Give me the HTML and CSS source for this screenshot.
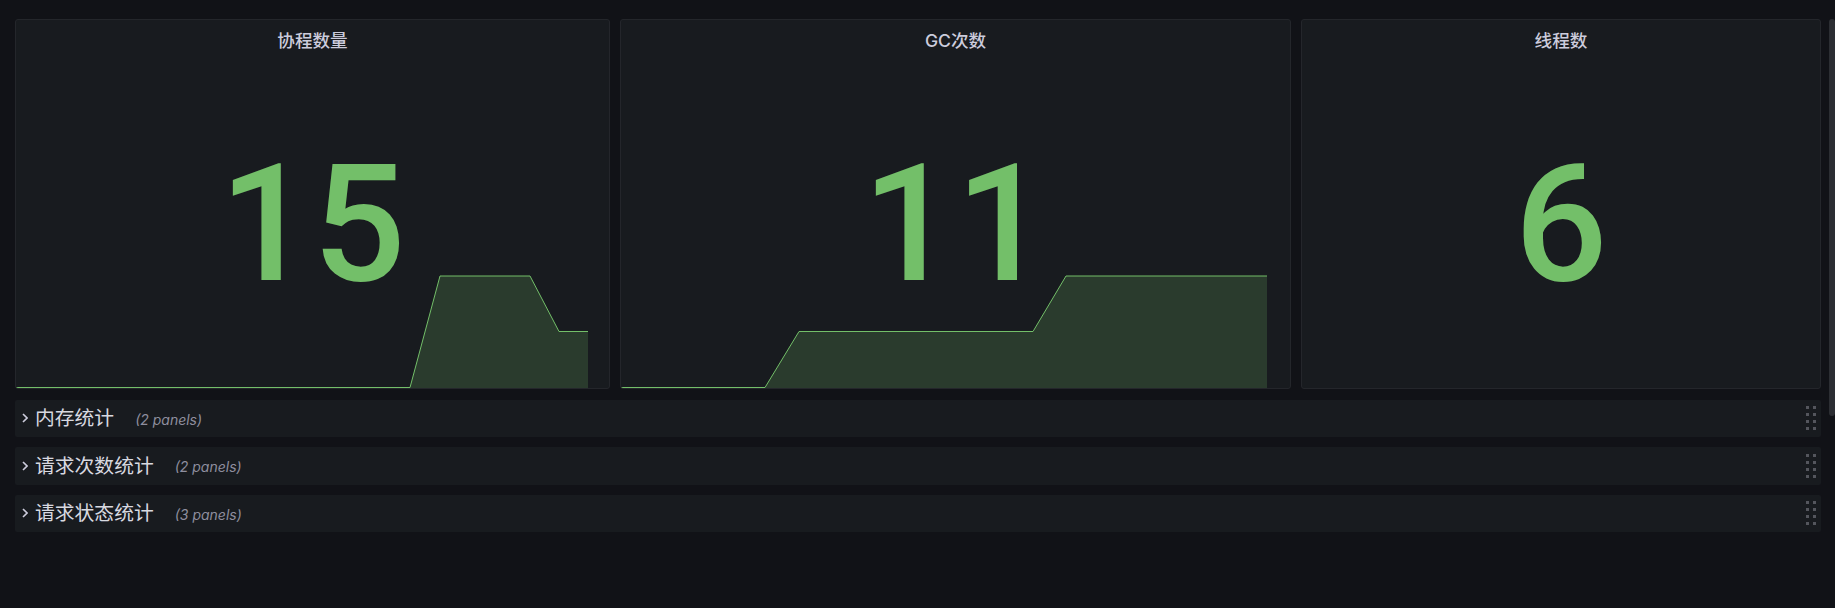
FILE: index.html
```html
<!DOCTYPE html>
<html lang="zh-CN">
<head>
<meta charset="utf-8">
<title>Dashboard</title>
<link rel="stylesheet" href="styles.css">
</head>
<body>
<div class="dashboard">
  <div class="panels">
    <section class="panel">
      <header class="panel-title">协程数量</header>
      <div class="panel-body"><span class="big-value">15</span></div>
      <svg class="spark" width="580" height="113" viewBox="0 0 580 113">
        <polygon class="spark-fill" points="0,112.5 394,112.5 424,1 514,1 543,56.5 572,56.5 572,113 0,113"/>
        <polyline class="spark-line" points="0,112.5 394,112.5 424,1 514,1 543,56.5 572,56.5"/>
      </svg>
    </section>
    <section class="panel">
      <header class="panel-title">GC次数</header>
      <div class="panel-body"><span class="big-value">11</span></div>
      <svg class="spark" width="650" height="113" viewBox="0 0 650 113">
        <polygon class="spark-fill" points="0,112.5 144,112.5 178,56.5 412,56.5 445,1 646,1 646,113 0,113"/>
        <polyline class="spark-line" points="0,112.5 144,112.5 178,56.5 412,56.5 445,1 646,1"/>
      </svg>
    </section>
    <section class="panel">
      <header class="panel-title">线程数</header>
      <div class="panel-body"><span class="big-value">6</span></div>
    </section>
  </div>

  <div class="rows">
    <div class="row">
      <svg class="chevron" width="6" height="10" viewBox="0 0 6 10"><polyline points="1,1 5,5 1,9"/></svg>
      <span class="row-title">内存统计</span>
      <span class="row-count">(2 panels)</span>
      <span class="drag"><i></i><i></i><i></i><i></i><i></i><i></i><i></i><i></i></span>
    </div>
    <div class="row">
      <svg class="chevron" width="6" height="10" viewBox="0 0 6 10"><polyline points="1,1 5,5 1,9"/></svg>
      <span class="row-title">请求次数统计</span>
      <span class="row-count">(2 panels)</span>
      <span class="drag"><i></i><i></i><i></i><i></i><i></i><i></i><i></i><i></i></span>
    </div>
    <div class="row">
      <svg class="chevron" width="6" height="10" viewBox="0 0 6 10"><polyline points="1,1 5,5 1,9"/></svg>
      <span class="row-title">请求状态统计</span>
      <span class="row-count">(3 panels)</span>
      <span class="drag"><i></i><i></i><i></i><i></i><i></i><i></i><i></i><i></i></span>
    </div>
  </div>
</div>
<div class="scrollbar"></div>
</body>
</html>
```

FILE: styles.css
```css
html, body {
  margin: 0;
  padding: 0;
  height: 100%;
}
body {
  background: #111217;
  color: #ccccdc;
  font-family: Inter, "Noto Sans CJK SC", sans-serif;
  overflow: hidden;
  position: relative;
}
.dashboard {
  padding: 19px 14px 0 15px;
}
.panels {
  display: grid;
  grid-template-columns: 595fr 671fr 520fr;
  gap: 10px;
}
.panel {
  position: relative;
  height: 370px;
  box-sizing: border-box;
  background: #181b1f;
  border: 1px solid #24262b;
  border-radius: 3px;
  display: flex;
  flex-direction: column;
  overflow: hidden;
}
.panel-title {
  height: 35px;
  box-sizing: border-box;
  padding-top: 9px;
  line-height: 24px;
  text-align: center;
  font-size: 17.6px;
  font-weight: 500;
  color: #ccccdc;
  font-family: Inter, "Noto Sans CJK SC", sans-serif;
}
.panel-body {
  flex: 1;
  display: flex;
  align-items: center;
  justify-content: center;
  position: relative;
  z-index: 1;
}
.big-value {
  font-family: Roboto, sans-serif;
  font-size: 164px;
  font-weight: 500;
  line-height: 1;
  color: #73bf69;
  padding-top: 4px;
}
.spark {
  position: absolute;
  left: 0;
  bottom: 0;
  z-index: 0;
}
.spark-fill {
  fill: rgba(115, 191, 105, 0.2);
  stroke: none;
}
.spark-line {
  fill: none;
  stroke: #73bf69;
  stroke-width: 1;
}
.rows {
  margin-top: 10.5px;
  display: flex;
  flex-direction: column;
  gap: 10px;
}
.row {
  height: 37.5px;
  background: #181b1f;
  border-radius: 2px;
  display: flex;
  align-items: center;
  padding: 0 5px 0 7px;
}
.chevron {
  flex: none;
  margin-right: 7px;
}
.chevron polyline {
  fill: none;
  stroke: #ccccdc;
  stroke-width: 1.6;
}
.row-title {
  font-size: 19.8px;
  color: #d8d9e0;
  font-family: Inter, "Noto Sans CJK SC", sans-serif;
  line-height: 24px;
}
.row-count {
  margin-left: 21px;
  font-size: 14px;
  font-style: italic;
  color: #8e8e9e;
  padding-top: 2px;
}
.drag {
  margin-left: auto;
  display: grid;
  grid-template-columns: 3px 3px;
  grid-auto-rows: 3px;
  column-gap: 4px;
  row-gap: 4px;
}
.drag i {
  display: block;
  background: #54565d;
}
.scrollbar {
  position: absolute;
  right: 0;
  top: 19px;
  width: 6px;
  height: 397px;
  background: #2c2e33;
  border-radius: 3px;
}
```
